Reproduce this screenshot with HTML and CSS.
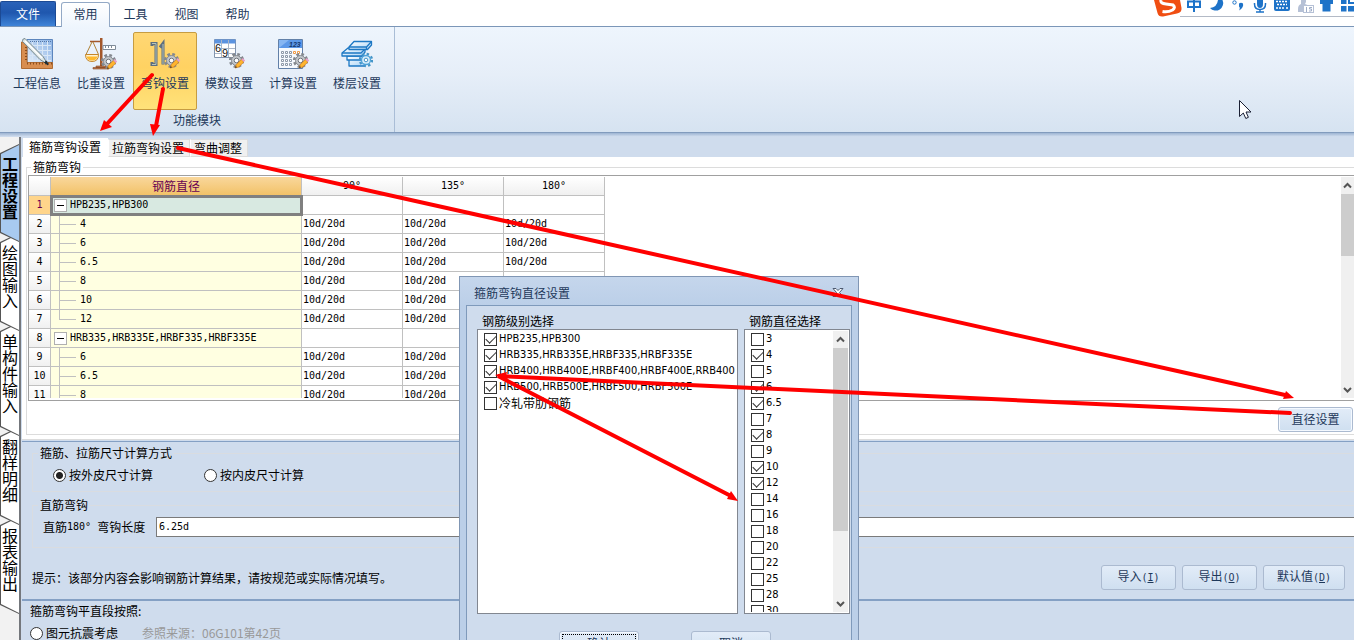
FILE: index.html
```html
<!DOCTYPE html>
<html lang="zh-CN">
<head>
<meta charset="utf-8">
<title>工程设置</title>
<link rel="stylesheet" href="styles.css">
</head>
<body>
<svg class="defs" aria-hidden="true">
  <defs>
    <linearGradient id="blueFill" x1="0" y1="0" x2="1" y2="1"><stop offset="0" stop-color="#ffffff"/><stop offset="1" stop-color="#a9d4f7"/></linearGradient>
    <linearGradient id="gridFill" x1="0" y1="1" x2="1" y2="0"><stop offset="0" stop-color="#e4effa"/><stop offset="1" stop-color="#8db4e6"/></linearGradient>
    <g id="gear">
      <circle cx="7.500" cy="7.500" r="6.300" fill="none" stroke="#84888e" stroke-width="2.600" stroke-dasharray="2.700 2.250"/>
      <circle cx="7.500" cy="7.500" r="5" fill="#c3c7cc" stroke="#858a90" stroke-width="1"/>
      <circle cx="7.500" cy="7.500" r="2.300" fill="#fff" stroke="#6f747b" stroke-width="1"/>
    </g>
    <g id="gearPencil">
      <use href="#gear"/>
      <path d="M6 15l1.300-3.500 5-5 2.500 2.500-5 5z" fill="#ffb52e" stroke="#c8761b" stroke-width=".7"/>
      <path d="M12.300 6.500l1.500-1.500 2.500 2.500L14.800 9z" fill="#e7a0c8"/>
      <path d="M6 15l.8-2 1.200 1.200z" fill="#333"/>
    </g>
  </defs>
</svg>

<header class="menubar">
  <button class="file-btn" type="button">文件</button>
  <nav class="menu-tabs">
    <button class="menu-tab active" type="button">常用</button>
    <button class="menu-tab" type="button">工具</button>
    <button class="menu-tab" type="button">视图</button>
    <button class="menu-tab" type="button">帮助</button>
  </nav>
  <svg class="ime" width="200" height="18" viewBox="0 0 200 18" aria-hidden="true">
    <path d="M26 16.500H200" stroke="#b3bac6"/>
    <path d="M0 0L3.500 13Q4.500 17 9 16.500L23 13.500Q28 12.500 27.500 8L26 0z" fill="#f04e12"/>
    <path d="M7 0Q6 3.500 12 4L19 5Q22 7.500 18.500 10Q14 12.500 8.500 11.500" fill="none" stroke="#fff" stroke-width="3"/>
    <g fill="none" stroke="#1e73c8" stroke-width="2"><path d="M34 1.500H46V7H34zM40 0V12"/></g>
    <path d="M64 0H68.500A7.500 7.500 0 0 1 56 8Q63 7.500 64 0z" fill="#1e73c8"/>
    <circle cx="80.500" cy="2.500" r="1.700" fill="none" stroke="#1e73c8"/>
    <path d="M85 3.500q2-1.500 4 0q1 4-4 7q1.500-3 0-4z" fill="#1e73c8"/>
    <path d="M103 0h6v4q0 4-3 4t-3-4z" fill="#1e73c8"/>
    <path d="M100.500 3v1q0 5.500 5.500 5.500t5.500-5.500v-1M106 9v3M102 12h8" fill="none" stroke="#1e73c8" stroke-width="1.500"/>
    <rect x="120" y="-4" width="16" height="15" rx="2" fill="#1e73c8"/>
    <path d="M122 1.500h12M123 4.500h10M122 8h2M125 8h6M132 8h2" stroke="#fff" stroke-width="1.500" stroke-dasharray="2 1"/>
    <path d="M147 0h5v2l-1 2 5 2v6h-12v-3q0-4 3-5z" fill="#b6c1d6"/>
    <rect x="149.500" y="5.500" width="10" height="7" fill="#fff" stroke="#b6c1d6"/>
    <path d="M152.500 7v5M158 7.500h-2.500v1.500h2v2h-2.500" fill="none" stroke="#9fadc8"/>
    <path d="M166 0h13v4h-2.500v7.500h-8V4H166z" fill="#1e73c8"/>
    <path d="M187 0h5.500v4H187zM194 0h6v4h-6zM187 6h5.500v5.500H187zM194 6h6v5.500h-6z" fill="#1e73c8"/>
    <path d="M196 0h4v2h-4z" fill="#fff"/>
  </svg>
</header>

<section class="ribbon">
  <div class="ribbon-group">
    <div class="ribbon-items">
      <button class="ribbon-btn" type="button">
        <svg width="32" height="32" viewBox="0 0 32 32"><path d="M6 1.500h25.500V26H6z" fill="url(#gridFill)" stroke="#5c85bd"/><path d="M11.500 3v20M16.500 3v20M21.500 3v20M26.500 3v20M8 7.500h22M8 12.500h22M8 17.500h22M8 22.500h22" stroke="#d9e7f6"/><path d="M9 3.500h21" stroke="#5377a8" stroke-dasharray="1 1"/><path d="M.5 4H6v20.500h25.500v6H.5z" fill="#d88e50" stroke="#b06c33"/><path d="M5 6v18M6 25.500h25" stroke="#8a4d1d" stroke-dasharray="1 2" stroke-width="2"/><path d="M1.500 3.500Q1 .5 4 .5L22 18.500l5 8-8-5z" fill="#dfe8e8" stroke="#76878d"/><path d="M4 3l17 17" stroke="#fff" stroke-width="1.500"/><path d="M23.500 24.500l3.500 2.500-1.500-4z" fill="#1d2c33" stroke="#1d2c33"/></svg>
        <span>工程信息</span>
      </button>
      <button class="ribbon-btn" type="button">
        <svg width="32" height="32" viewBox="0 0 32 32"><path d="M15 0h2.500v28H15z" fill="#a3572a"/><path d="M11 28h10v1.500h-10zM8 29.500h16V31H8z" fill="#b9784d" stroke="#8a4721" stroke-width=".6"/><path d="M5 3.500h11" fill="none" stroke="#a3572a" stroke-width="1.500"/><path d="M7 4L1 16.500M8 4l5.500 12.500" stroke="#b08236"/><path d="M.5 16.500q0 7 6.500 7t6.500-7z" fill="#fff3cf" stroke="#c5862a"/><path d="M1.500 18.500h11q-1 4-5.500 4t-5.500-4z" fill="#ffb92e"/><path d="M18 7.500h12.500v4H18z" fill="#fff" stroke="#7f8b98"/><path d="M20.500 8v2M23.500 8v2M26.500 8v2" stroke="#7f8b98"/><use href="#gearPencil" x="16" y="16"/></svg>
        <span>比重设置</span>
      </button>
      <button class="ribbon-btn selected" type="button">
        <svg width="32" height="32" viewBox="0 0 32 32"><path d="M3 8V5.500h4v21H3v-2.500M11 9.500l3-4v21" fill="none" stroke="#5d6f80" stroke-width="3"/><path d="M3 5.500h4v21H3M14 6v20" fill="none" stroke="#b9c5b8" stroke-width="1"/><use href="#gearPencil" x="15" y="15"/></svg>
        <span>弯钩设置</span>
      </button>
      <button class="ribbon-btn" type="button">
        <svg width="32" height="32" viewBox="0 0 32 32"><path d="M1.500 1.500h21v18h-21z" fill="#fff" stroke="#8294ad"/><path d="M1.500 1.500h21v4h-21z" fill="#5b93e0"/><path d="M8.500 2v17M15.500 2v17M2 10.500h20M2 15.500h20" stroke="#aab6c8"/><path d="M2 6.500h6V15H2zM9 11h6v8H9z" fill="#fff"/><text x="2" y="14" class="icon-digit">6</text><text x="9" y="19" class="icon-digit">9</text><use href="#gearPencil" x="16" y="15"/></svg>
        <span>模数设置</span>
      </button>
      <button class="ribbon-btn" type="button">
        <svg width="32" height="32" viewBox="0 0 32 32"><path d="M1.500 1.500h24v29h-24z" fill="#f5f9fe" stroke="#6280a8"/><path d="M2 2h23v8H2z" fill="#5c98e8"/><path d="M2 10L12 2H2z" fill="#86b6f2"/><text x="12" y="9" class="icon-small">123</text><g fill="#fff" stroke="#8c98a8" stroke-width="1"><path d="M4.500 13.500h2v2h-2zM8.500 13.500h2v2h-2zM12.500 13.500h2v2h-2zM4.500 17.500h2v2h-2zM8.500 17.500h2v2h-2zM12.500 17.500h2v2h-2zM4.500 21.500h2v2h-2zM8.500 21.500h2v2h-2zM12.500 21.500h2v2h-2zM4.500 25.500h2v2h-2zM8.500 25.500h2v2h-2zM12.500 25.500h2v2h-2z"/><path d="M16.500 13.500h2v2h-2zM20.500 13.500h2v2h-2z" stroke="#f09a45"/></g><use href="#gearPencil" x="16" y="15"/></svg>
        <span>计算设置</span>
      </button>
      <button class="ribbon-btn" type="button">
        <svg width="32" height="32" viewBox="0 0 32 32"><g fill="url(#blueFill)" stroke="#1d78c4" stroke-width="1.300" stroke-linejoin="round"><path d="M8 22h16v6H8zM6 18h18v4H6z"/><path d="M1 15l6-5h17v4l-3 4H1z"/><path d="M1 15h19l4-4" fill="none"/><path d="M8 9l5-5.500h17.500V7l-4 4.500H8z"/><path d="M8 9h17.500l5-5.500M25.500 9v2.500" fill="none"/></g><circle cx="25" cy="22" r="6" fill="none" stroke="#4595c8" stroke-width="2.400" stroke-dasharray="2.400 2.300"/><circle cx="25" cy="22" r="4.500" fill="#d9edfb" stroke="#4fa3d8" stroke-width="1.300"/><circle cx="25" cy="22" r="1.800" fill="#fff" stroke="#4595c8"/></svg>
        <span>楼层设置</span>
      </button>
    </div>
    <div class="group-label">功能模块</div>
  </div>
</section>
<div class="ribbon-edge"></div>

<div class="workspace">
  <nav class="side-tabs">
    <button class="side-tab active" type="button"><span>工程设置</span></button>
    <button class="side-tab" type="button"><span>绘图输入</span></button>
    <button class="side-tab" type="button"><span>单构件输入</span></button>
    <button class="side-tab" type="button"><span>翻样明细</span></button>
    <button class="side-tab" type="button"><span>报表输出</span></button>
  </nav>

  <main class="content">
    <div class="page-tabs">
      <button class="page-tab active" type="button">箍筋弯钩设置</button>
      <button class="page-tab" type="button">拉筋弯钩设置</button>
      <button class="page-tab" type="button">弯曲调整</button>
    </div>

    <section class="hook-page">
      <fieldset class="hook-box">
        <legend>箍筋弯钩</legend>
        <div class="grid-frame">
          <div class="grid-view">
            <table class="grid">
              <colgroup><col class="c-num"><col class="c-dia"><col class="c-val"><col class="c-val"><col class="c-val"></colgroup>
              <thead><tr><th></th><th class="dia-head">钢筋直径</th><th>90°</th><th>135°</th><th>180°</th></tr></thead>
              <tbody>
                <tr class="current"><th>1</th><td class="group"><i class="toggle"></i>HPB235,HPB300</td><td></td><td></td><td></td></tr>
                <tr><th>2</th><td class="leaf">4</td><td>10d/20d</td><td>10d/20d</td><td>10d/20d</td></tr>
                <tr><th>3</th><td class="leaf">6</td><td>10d/20d</td><td>10d/20d</td><td>10d/20d</td></tr>
                <tr><th>4</th><td class="leaf">6.5</td><td>10d/20d</td><td>10d/20d</td><td>10d/20d</td></tr>
                <tr><th>5</th><td class="leaf">8</td><td>10d/20d</td><td>10d/20d</td><td></td></tr>
                <tr><th>6</th><td class="leaf">10</td><td>10d/20d</td><td>10d/20d</td><td></td></tr>
                <tr><th>7</th><td class="leaf last">12</td><td>10d/20d</td><td>10d/20d</td><td></td></tr>
                <tr><th>8</th><td class="group"><i class="toggle"></i>HRB335,HRB335E,HRBF335,HRBF335E</td><td></td><td></td><td></td></tr>
                <tr><th>9</th><td class="leaf">6</td><td>10d/20d</td><td>10d/20d</td><td></td></tr>
                <tr><th>10</th><td class="leaf">6.5</td><td>10d/20d</td><td>10d/20d</td><td></td></tr>
                <tr><th>11</th><td class="leaf">8</td><td>10d/20d</td><td>10d/20d</td><td></td></tr>
              </tbody>
            </table>
          </div>
          <div class="scrollbar">
            <svg width="9" height="17" viewBox="0 0 9 17"><path d="M1 10.500l3.500-3.500L8 10.500" class="chev"/></svg>
            <div class="track"><div class="thumb short"></div></div>
            <svg width="9" height="17" viewBox="0 0 9 17"><path d="M1 7l3.500 3.500L8 7" class="chev"/></svg>
          </div>
        </div>
        <div class="hook-actions"><button class="btn default" type="button">直径设置</button></div>
      </fieldset>
    </section>

    <section class="settings">
      <fieldset class="box">
        <legend>箍筋、拉筋尺寸计算方式</legend>
        <div class="radio-row">
          <label><input type="radio" name="calc" checked>按外皮尺寸计算</label>
          <label><input type="radio" name="calc">按内皮尺寸计算</label>
        </div>
      </fieldset>
      <fieldset class="box straight">
        <legend>直筋弯钩</legend>
        <div class="length-row">
          <label for="len">直筋<span class="mono">180° </span>弯钩长度</label>
          <input id="len" class="mono" type="text" value="6.25d">
        </div>
      </fieldset>
      <div class="foot">
        <span class="hint">提示：该部分内容会影响钢筋计算结果，请按规范或实际情况填写。</span>
        <div class="foot-btns">
          <button class="btn" type="button">导入<span class="mono">(<u>I</u>)</span></button>
          <button class="btn" type="button">导出<span class="mono">(<u>O</u>)</span></button>
          <button class="btn wide" type="button">默认值<span class="mono">(<u>D</u>)</span></button>
        </div>
      </div>
    </section>

    <section class="seismic">
      <div class="seismic-title">箍筋弯钩平直段按照:</div>
      <div class="seismic-row">
        <label><input type="radio" name="seismic">图元抗震考虑</label>
        <span class="source">参照来源：06G101第42页</span>
      </div>
    </section>
  </main>
</div>

<div class="dialog" role="dialog" aria-labelledby="dlg-title">
  <div class="dialog-head">
    <span id="dlg-title">箍筋弯钩直径设置</span>
    <button class="close" type="button" aria-label="关闭"><svg width="12" height="9" viewBox="0 0 12 9"><path d="M1 .5h3L6 2.500 8 .5h3L7.500 4.500 11 8.500H8L6 6.500 4 8.500H1L4.500 4.500z" fill="#fff" stroke="#4c5a70"/></svg></button>
  </div>
  <div class="dialog-body">
    <div class="lists">
      <div class="list-col grades">
        <div class="list-title">钢筋级别选择</div>
        <div class="list">
          <div class="items">
            <label><input type="checkbox" checked>HPB235,HPB300</label>
            <label><input type="checkbox" checked>HRB335,HRB335E,HRBF335,HRBF335E</label>
            <label><input type="checkbox" checked>HRB400,HRB400E,HRBF400,HRBF400E,RRB400</label>
            <label><input type="checkbox" checked>HRB500,HRB500E,HRBF500,HRBF500E</label>
            <label class="cjk"><input type="checkbox">冷轧带肋钢筋</label>
          </div>
        </div>
      </div>
      <div class="list-col sizes">
        <div class="list-title">钢筋直径选择</div>
        <div class="list">
          <div class="items">
            <label><input type="checkbox">3</label>
            <label><input type="checkbox" checked>4</label>
            <label><input type="checkbox">5</label>
            <label><input type="checkbox" checked>6</label>
            <label><input type="checkbox" checked>6.5</label>
            <label><input type="checkbox">7</label>
            <label><input type="checkbox" checked>8</label>
            <label><input type="checkbox">9</label>
            <label><input type="checkbox" checked>10</label>
            <label><input type="checkbox" checked>12</label>
            <label><input type="checkbox">14</label>
            <label><input type="checkbox">16</label>
            <label><input type="checkbox">18</label>
            <label><input type="checkbox">20</label>
            <label><input type="checkbox">22</label>
            <label><input type="checkbox">25</label>
            <label><input type="checkbox">28</label>
            <label><input type="checkbox">30</label>
          </div>
          <div class="scrollbar">
            <svg width="9" height="17" viewBox="0 0 9 17"><path d="M1 10.500l3.500-3.500L8 10.500" class="chev"/></svg>
            <div class="track"><div class="thumb tall"></div></div>
            <svg width="9" height="17" viewBox="0 0 9 17"><path d="M1 7l3.500 3.500L8 7" class="chev"/></svg>
          </div>
        </div>
      </div>
    </div>
    <div class="dialog-btns">
      <button class="btn default focus" type="button">确认</button>
      <button class="btn" type="button">取消</button>
    </div>
  </div>
</div>

<svg class="arrows" width="1354" height="640" viewBox="0 0 1354 640" aria-hidden="true">
  <g stroke="#f00" stroke-width="4" stroke-linecap="round" fill="none">
    <path d="M152 75L106 125M163 89L156 126M178 148L1285 395M1290 413L498 376L729 495"/>
  </g>
  <g fill="#f00">
    <path d="M100 131L104 120L112 127z"/>
    <path d="M153 136L150 124L160 125z"/>
    <path d="M1294 398L1286 391L1283 399z"/>
    <path d="M738 501L731 491L727 499z"/>
    <path d="M495 375L507 372L505 380z"/>
  </g>
</svg>
<svg class="cursor" width="13" height="20" viewBox="0 0 13 20" aria-hidden="true"><path d="M.5.5v16l3.800-3.500 2.500 5.500 2.600-1.200L7 12h5z" fill="#fff" stroke="#1a1f33"/></svg>
</body>
</html>
```
FILE: styles.css
```css
* { box-sizing: border-box; }
html, body { height: 100%; }
body {
  margin: 0;
  overflow: hidden;
  position: relative;
  display: flex;
  flex-direction: column;
  background: #cfdced;
  color: #000;
  font: 12px/16px "Noto Sans CJK SC", sans-serif;
}
button, input { font: inherit; color: inherit; margin: 0; }
button { padding: 0; border: 0; background: none; }
fieldset { min-width: 0; margin: 0; padding: 0; }
.defs { position: absolute; width: 0; height: 0; }
.mono { font-family: "DejaVu Sans Mono", monospace; font-size: 10px; white-space: pre; }

/* menu bar */
.menubar {
  flex: none;
  display: flex;
  align-items: flex-end;
  height: 27px;
  background: #fff;
  border-bottom: 1px solid #7b96b8;
  color: #1e395b;
}
.file-btn {
  width: 56px;
  height: 25px;
  color: #fff;
  background: linear-gradient(#2a62b8, #1f57ae 45%, #3f84d8);
  border: 1px solid #1c4a94;
  border-bottom: 0;
  border-radius: 2px 2px 0 0;
}
.menu-tabs { display: flex; margin: 0 0 -1px 5px; }
.menu-tab { width: 51px; height: 25px; padding-bottom: 2px; }
.menu-tab.active {
  width: 49px;
  background: linear-gradient(#fff, #eef5fd);
  border: 1px solid #93a9c6;
  border-bottom: 0;
  border-radius: 3px 3px 0 0;
}
.ime { position: absolute; top: 0; right: 0; }

/* ribbon */
.ribbon {
  flex: none;
  display: flex;
  height: 106px;
  background: linear-gradient(#eef5fd, #e6eef8 45%, #d6e3f1);
  border-bottom: 1px solid #819bbd;
  color: #1e395b;
}
.ribbon-group {
  display: flex;
  flex-direction: column;
  padding: 5px 0 0 5px;
  width: 395px;
  border-right: 1px solid #a9bdd6;
}
.ribbon-items { display: flex; }
.ribbon-btn {
  display: flex;
  flex-direction: column;
  align-items: center;
  gap: 5px;
  width: 64px;
  height: 78px;
  padding-top: 5px;
  border: 1px solid transparent;
  border-radius: 2px;
}
.ribbon-btn.selected {
  background: linear-gradient(#ffd774, #ffd262 45%, #ffe27a);
  border-color: #c69c42;
}
.icon-digit { font: 11px "Liberation Sans", sans-serif; fill: #111; }
.icon-small { font: italic bold 7px "Liberation Sans", sans-serif; fill: #16396f; }
.group-label { text-align: center; margin-top: 2px; padding-right: 5px; }
.ribbon-edge { flex: none; height: 4px; background: linear-gradient(#9db4d2, #cfdced 90%, #e6edf5); }

/* workspace */
.workspace { flex: 1; display: flex; min-height: 0; }
.side-tabs {
  flex: none;
  display: flex;
  flex-direction: column;
  width: 21px;
  padding-top: 7px;
  background: #f2f2f2;
  border-right: 2px solid #74777c;
}
.side-tab {
  position: relative;
  flex: none;
  width: 19px;
  padding: 11px 1px 23px 2px;
  background: #555;
  font-size: 16px;
  clip-path: polygon(0 9px, 100% 0, 100% 100%, 0 calc(100% - 9px));
}
.side-tab::before {
  content: "";
  position: absolute;
  inset: 0;
  background: #fff;
  clip-path: polygon(1px 10px, 100% 1px, 100% calc(100% - 1px), 1px calc(100% - 10px));
}
.side-tab span { position: relative; display: block; width: 16px; word-break: break-all; }
.side-tab + .side-tab { margin-top: -9px; }
.side-tab:nth-child(1) { z-index: 5; }
.side-tab:nth-child(2) { z-index: 4; }
.side-tab:nth-child(3) { z-index: 3; }
.side-tab:nth-child(4) { z-index: 2; }
.side-tab.active { font-weight: bold; }
.side-tab.active::before { background: #a8caf0; }

.content { flex: 1; min-width: 0; padding-left: 1px; display: flex; flex-direction: column; }
.page-tabs { flex: none; display: flex; align-items: flex-end; height: 20px; padding: 1px 0 0 1px; }
.page-tab {
  height: 18px;
  padding: 0 5px 0 3px;
  background: #f0f0f0;
  border: 1px solid #dcdcdc;
  border-left-color: #fff;
}
.page-tab.active { height: 19px; padding: 0 6px 2px 5px; background: #fff; border-color: #fff; }

.hook-page { flex: none; padding: 2px 0 4px 4px; background: #fff; border-bottom: 1px solid #dcdcdc; }
.hook-box { border: 1px solid #dcdcdc; border-right: 0; padding: 0 1px 2px 1px; }
.hook-box legend { margin-left: 3px; padding: 0 2px; }
.grid-frame {
  display: flex;
  height: 226px;
  margin-right: -1px;
  padding: 1px 0 2px;
  border: 1px solid #a0a0a0;
  border-right: 0;
}
.grid-view { flex: 1; min-width: 0; overflow: hidden; }
.grid { table-layout: fixed; width: 576px; border-collapse: separate; border-spacing: 0; font: 10px/16px "DejaVu Sans Mono", monospace; }
.c-num { width: 22px; }
.c-dia { width: 251px; }
.c-val { width: 101px; }
.grid th, .grid td {
  height: 19px;
  padding: 0 1px;
  font-weight: normal;
  text-align: left;
  white-space: nowrap;
  border-right: 1px solid #c0c0c0;
  border-bottom: 1px solid #c0c0c0;
}
.grid th { text-align: center; background: linear-gradient(#fff, #f0f0f0); }
.grid .dia-head {
  font: 12px/16px "Noto Sans CJK SC", sans-serif;
  color: #660052;
  background: linear-gradient(#f9d79c, #f2c268);
}
.grid td.group { padding-left: 3px; background: #ffffe1; }
.grid td.leaf {
  padding-left: 29px;
  background:
    linear-gradient(#c0c0c0, #c0c0c0) 8px 0 / 1px 100% no-repeat,
    linear-gradient(#c0c0c0, #c0c0c0) 8px 9px / 17px 1px no-repeat,
    #ffffe1;
}
.grid td.leaf.last { background-size: 1px 10px, 17px 1px, auto; }
.grid .current th { background: #ffd58b; color: #660052; }
.grid .current td.group { background: #d8e9e1; outline: 3px solid #808080; outline-offset: -2px; }
.toggle {
  display: inline-block;
  vertical-align: middle;
  width: 13px;
  height: 13px;
  margin-right: 3px;
  border: 1px solid #b0b0b0;
  background: linear-gradient(#000, #000) 2px 5px / 7px 1px no-repeat, #fff;
}

.scrollbar {
  flex: none;
  display: flex;
  flex-direction: column;
  align-items: center;
  width: 15px;
  background: #f0f0f0;
}
.grid-frame .scrollbar { width: 13px; }
.track { flex: 1; width: 100%; }
.thumb { background: #cdcdcd; }
.thumb.short { height: 62px; }
.thumb.tall { height: 183px; }
.chev { fill: none; stroke: #555; stroke-width: 2; }

.hook-actions { display: flex; justify-content: flex-end; padding-top: 6px; }
.btn {
  width: 75px;
  height: 25px;
  padding-bottom: 1px;
  color: #1e395b;
  background: linear-gradient(#e2ecf8, #cfdff0);
  border: 1px solid #abbad0;
  border-radius: 3px;
}
.btn.default { box-shadow: inset 0 0 0 1px #f4f9ff; }
.btn.wide { width: 82px; }

/* settings */
.settings { flex: none; padding: 3px 0 9px 10px; border-top: 1px solid #84a0c4; border-bottom: 2px solid #84a0c4; margin-top: 1px; }
.box { border: 1px solid #d9dce0; border-right: 0; padding: 4px 0 6px; }
.box legend { margin-left: 5px; padding: 0 2px; }
.box.straight { margin-top: 5px; padding-bottom: 10px; }
.radio-row { display: flex; gap: 51px; height: 20px; padding-left: 20px; }
label { display: flex; align-items: center; white-space: nowrap; }
.radio-row label, .seismic-row label { gap: 3px; }
input[type="radio"] {
  flex: none;
  appearance: none;
  width: 13px;
  height: 13px;
  border: 1px solid #333;
  border-radius: 50%;
  background: #fff;
}
input[type="radio"]:checked { background: radial-gradient(circle, #222 3px, #fff 4px); }
.length-row { display: flex; padding-left: 10px; height: 20px; }
.length-row label { width: 113px; }
.length-row input { flex: 1; min-width: 0; padding: 0 2px; border: 1px solid #7a7a7a; border-right: 0; background: #fff; }
.foot { display: flex; align-items: center; justify-content: space-between; margin-top: 17px; padding-right: 9px; }
.foot-btns { display: flex; gap: 6px; }
.seismic { padding: 2px 0 0 8px; }
.seismic-row { display: flex; align-items: center; gap: 24px; margin-top: 6px; }
.source { color: #999; }

/* dialog */
.dialog {
  position: absolute;
  left: 459px;
  top: 276px;
  width: 400px;
  padding: 0 6px 6px;
  border: 1px solid #8096b4;
  background: linear-gradient(#c5d6ec, #bbcfe8 29px);
}
.dialog-head { display: flex; align-items: center; justify-content: space-between; height: 28px; padding: 3px 8px 0; color: #1e395b; }
.close { display: flex; }
.dialog-body { padding: 7px 1px 16px 10px; border: 1px solid #7f9abb; background: #cfdced; }
.lists { display: flex; gap: 6px; }
.list-title { padding-left: 5px; }
.list { display: flex; height: 285px; padding: 1px; border: 1px solid #828790; background: #fff; }
.grades { flex: 1; }
.sizes { width: 106px; }
.items { flex: 1; min-width: 0; overflow: hidden; font: 11px/16px "DejaVu Sans Condensed", "DejaVu Sans", sans-serif; }
.items label { height: 16px; gap: 2px; padding-left: 5px; }
.items .cjk { font: 12px/16px "Noto Sans CJK SC", sans-serif; }
input[type="checkbox"] {
  flex: none;
  appearance: none;
  display: grid;
  place-items: center;
  width: 13px;
  height: 13px;
  border: 1px solid #333;
  background: #fff;
}
input[type="checkbox"]:checked::after {
  content: "";
  width: 9px;
  height: 5px;
  margin-bottom: 3px;
  border-left: 1px solid #333;
  border-bottom: 1px solid #333;
  transform: rotate(-45deg);
}
.dialog-btns { display: flex; justify-content: center; gap: 52px; margin-top: 17px; padding-left: 3px; }
.dialog-btns .btn { width: 80px; }
.btn.focus { outline: 1px dotted #000; outline-offset: -4px; }

/* annotations */
.arrows { position: absolute; left: 0; top: 0; pointer-events: none; }
.cursor { position: absolute; left: 1239px; top: 100px; pointer-events: none; }
```
